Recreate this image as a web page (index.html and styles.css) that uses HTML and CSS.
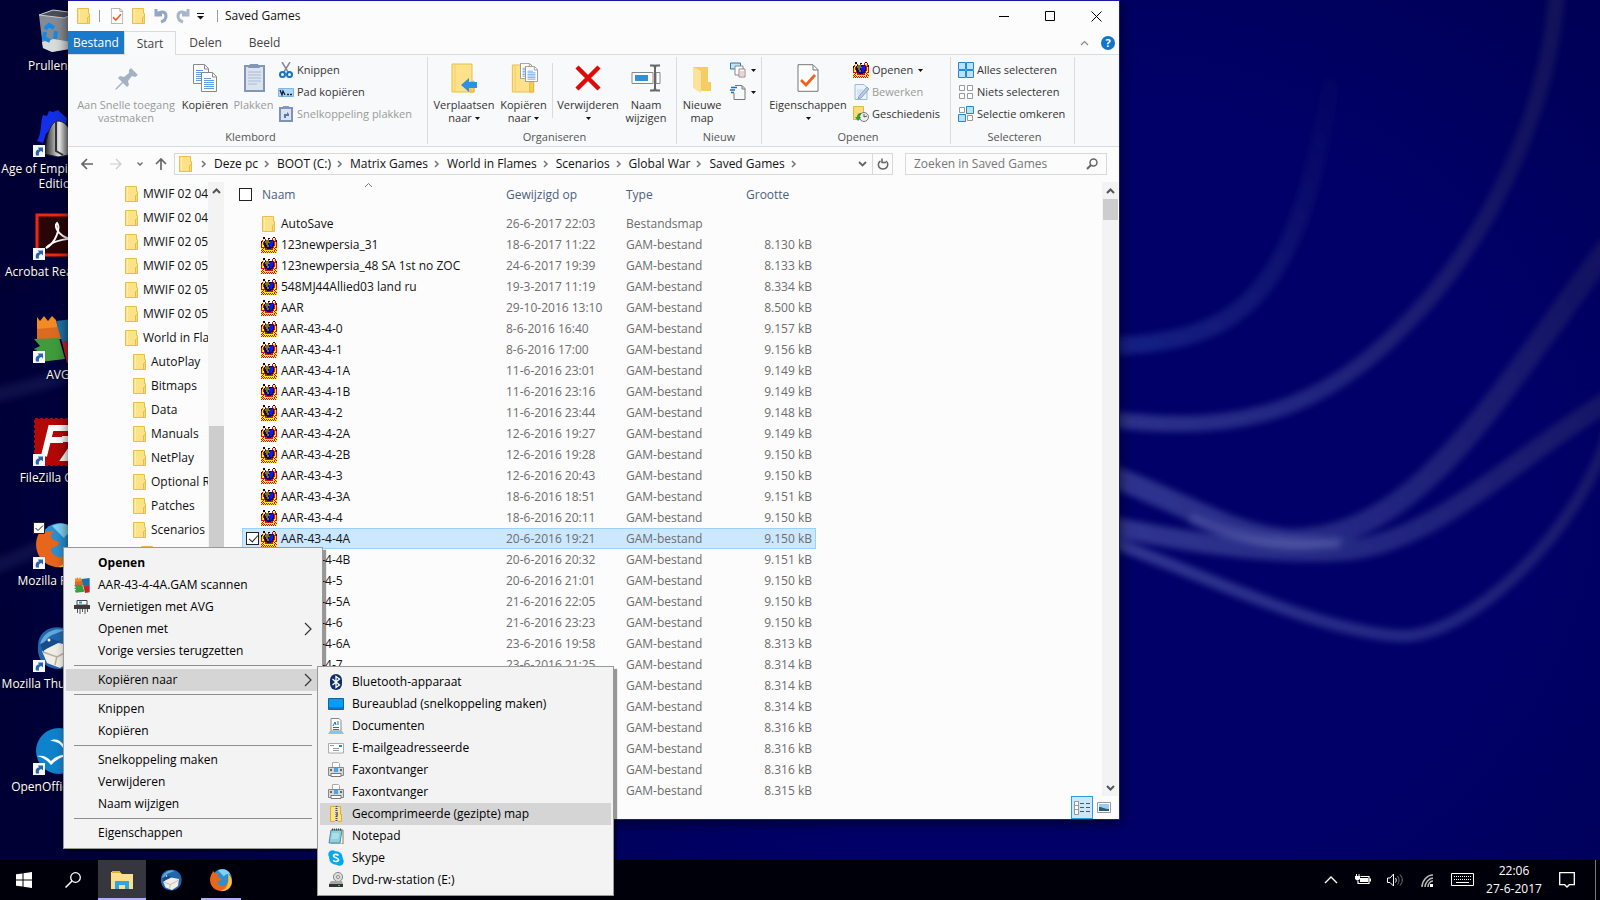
FILE: index.html
```html
<!DOCTYPE html>
<html lang="nl">
<head>
<meta charset="utf-8">
<title>Saved Games</title>
<link rel="stylesheet" href="styles.css">
</head>
<body>
<svg class="defs" aria-hidden="true">
  <defs>
    <symbol id="folder" viewBox="0 0 14 16"><path d="M.5.5h11v5h1v10H.5z" fill="#fde28a" stroke="#e8bf47"/><path d="M2.500 1v14" stroke="#ffefb5"/><path d="M10.500 15.500v-6l2-1.500v7.500z" fill="#fbd976" stroke="#e8bf47"/></symbol>
    <symbol id="bigfolder" viewBox="0 0 24 30"><path d="M1 1h20v18h2v10H1z" fill="#fde28a" stroke="#e8bf47"/><path d="M4 2v26" stroke="#f2cf66"/><path d="M19 29V19l4-1v11z" fill="#f7ce5d" stroke="#e3b53c"/></symbol>
    <symbol id="gam" viewBox="0 0 16 16" shape-rendering="crispEdges">
      <path d="M1 3h1v2h2V2h1v1h2V1h1v2h3V1h1v2h2V1h1v3h1v12H0V6h1z" fill="#e00d08"/>
      <path d="M0 11h2v1h2v1h8v-1h2v-1h2v5H0z" fill="#ffef10"/>
      <path d="M1 5h1v5H1zM14 5h1v5h-1zM2 2h1v3H2zM13 2h1v2h-1zM3 11h1v1H3zM12 11h1v1h-1zM2 8h1v2H2zM13 9h1v2h-1z" fill="#ffef10"/>
      <path d="M0 15h1v1H0zM2 15h1v1H2zM4 15h1v1H4zM6 15h1v1H6zM8 15h1v1H8zM10 15h1v1h-1zM12 15h1v1h-1zM14 15h1v1h-1zM1 14h1v1H1zM3 14h1v1H3zM5 14h1v1H5zM7 14h1v1H7zM9 14h1v1H9zM11 14h1v1h-1zM13 14h1v1h-1zM0 13h1v1H0zM2 13h1v1H2zM13 13h1v1h-1zM15 13h1v1h-1zM1 12h1v1H1zM14 12h1v1h-1z" fill="#e00d08"/>
      <path d="M4 3h8v1h1v5h-1v2h-2v1H6v-1H4V9H3V4h1z" fill="#07077a"/>
      <path d="M9 4h3v4h-1v2H9V8H8V6h1z" fill="#1216f0"/>
      <path d="M5 3h3v2h1v1H7v2h1v2H6V8H5V6H4V4h1z" fill="#7e7c08"/>
      <path d="M2 0h2v2H2zM7 1h2v1H7zM12 0h2v1h-2zM15 3h1v2h-1zM0 4h1v2H0z" fill="#1b0505"/>
    </symbol>
    <symbol id="chev" viewBox="0 0 6 8"><path d="M1 1l3 3-3 3" fill="none" stroke="#777" stroke-width="1.600"/></symbol>
    <symbol id="drop" viewBox="0 0 5 3"><path d="M0 0h5L2.500 3z" fill="#111"/></symbol>
    <symbol id="up" viewBox="0 0 9 6"><path d="M1 5l3.500-3.500L8 5" fill="none" stroke="currentColor" stroke-width="2"/></symbol>
    <symbol id="sub" viewBox="0 0 8 14"><path d="M1 1l6 6-6 6" fill="none" stroke="#333" stroke-width="1.200"/></symbol>
    <symbol id="doccheck" viewBox="0 0 22 28"><path d="M1 .7h15l5 5v21.600H1z" fill="#fff" stroke="#777"/><path d="M16 1v5h5" fill="none" stroke="#777"/><path d="M4 16l5 5 9-10" fill="none" stroke="#f0601c" stroke-width="2.800"/></symbol>
    <symbol id="page" viewBox="0 0 16 20"><path d="M.5.5h11l4 4v15H.5z" fill="#fff" stroke="#888"/><path d="M11.500 1v4h4" fill="none" stroke="#888"/><path d="M3 6.500h7M3 8.500h10M3 10.500h10M3 12.500h10M3 14.500h10M3 16.500h10" stroke="#5b9bea"/></symbol>
    <symbol id="shortcut" viewBox="0 0 12 12"><path d="M0 0h12v12H0z" fill="#f5f7fa"/><path d="M3 10.500C2 6 4 4.500 6 4.500L5 2.500h5v5L8.500 6C6 6.500 5.500 8 6 10.500z" fill="#2b62a8"/></symbol>
    <symbol id="firefox" viewBox="0 0 48 48"><circle cx="26" cy="22" r="20" fill="#2b8fd0"/><path d="M18 5c8-5 20-3 25 8-6-2-11 0-13 4z" fill="#7fd2f2"/><path d="M4 14c2-3 3-5 4-8 2 2 3 3 4 5 3-1 6-1 8 0-3 2-4 4-2 7 4 2 8 3 7 5-2 4-8 2-8 6 1 7 12 10 18 3 4-5 6-10 3-18 7 4 10 12 7 20C40 46 26 49 15 44 4 39-1 26 4 14z" fill="#e8661b"/><path d="M38 12c7 5 9 14 6 22-4 9-12 13-20 12 11-4 17-14 14-34z" fill="#fbc23a"/></symbol>
    <symbol id="tbird" viewBox="0 0 48 48"><path d="M4 22C4 8 16 1 30 4c13 3 18 16 14 28-5 11-16 15-26 12C8 41 3 33 4 22z" fill="#2166ac"/><path d="M6 20C9 8 21 3 31 6L18 11c-6 3-10 9-8 18z" fill="#62a9dc"/><path d="M8 27l16-8 16 3-2 14-12 8-13-5z" fill="#f1eee6"/><path d="M9 28l14 5 15-8M21 41l2-9" fill="none" stroke="#b7b0a4" stroke-width="1.500"/><path d="M6 20c5-1 8-6 12-5s5 3 9 1c-5 6-14 6-18 12z" fill="#174c8c"/><circle cx="15" cy="16" r="1.500" fill="#fff"/></symbol>
    <symbol id="avg" viewBox="0 0 48 48"><path d="M3 2l3 4 4-5 4 5 4-5 4 4 5 19-24 1z" fill="#f28b23"/><path d="M3 14l22-2 2 12-24 2z" fill="#dc6a22"/><path d="M22 6l25-3v23l-19 1z" fill="#1c72a8"/><path d="M0 24l25-1 6 21-25 3-4-6 5-3-7-4 6-3z" fill="#3f9b3b"/><path d="M28 27l19-2v21l-14 2z" fill="#c72322"/></symbol>
    <symbol id="fax" viewBox="0 0 16 16"><path d="M4.500 5V.5h6l1 1V5" fill="#fff" stroke="#aaa"/><path d="M.5 5.500h15v8H.5z" fill="#d4d8db" stroke="#888"/><path d="M2 7h2v2H2zM12 7h2v2h-2z" fill="#666"/><path d="M6 6h4v4H6z" fill="#45a8e5"/><path d="M3 11.500h10v3H3z" fill="#fff" stroke="#777"/></symbol>
    <filter id="soft"><feGaussianBlur stdDeviation="3"/></filter>
    <linearGradient id="metal"><stop offset="0" stop-color="#222"/><stop offset=".5" stop-color="#eee"/><stop offset="1" stop-color="#333"/></linearGradient>
    <linearGradient id="fade" gradientUnits="userSpaceOnUse" x1="1100" y1="600" x2="1600" y2="300"><stop offset="0" stop-color="#6068b8" stop-opacity=".55"/><stop offset=".5" stop-color="#5058a0" stop-opacity=".42"/><stop offset="1" stop-color="#556" stop-opacity=".22"/></linearGradient>
    <linearGradient id="fade1" gradientUnits="userSpaceOnUse" x1="1120" y1="345" x2="1335" y2="40"><stop offset="0" stop-color="#3450b0" stop-opacity=".4"/><stop offset=".5" stop-color="#445088" stop-opacity=".2"/><stop offset="1" stop-color="#445" stop-opacity="0"/></linearGradient>
  </defs>
</svg>

<svg class="wallpaper" viewBox="0 0 1600 900" preserveAspectRatio="xMaxYMid slice" aria-hidden="true">
  <g fill="none" filter="url(#soft)" stroke="url(#fade)">
    <path stroke="url(#fade1)" stroke-width="18" d="M1100 346C1200 346 1255 320 1290 240C1318 180 1325 110 1345 10"/>
    <path stroke-width="16" d="M1100 418C1260 440 1340 400 1430 298C1500 215 1550 100 1557-10"/>
    <path stroke-width="22" d="M1100 472C1180 500 1230 536 1290 540C1420 540 1500 390 1610 245"/>
    <path stroke-width="20" d="M1100 524C1200 545 1280 556 1350 550C1440 538 1510 460 1610 400"/>
    <path stroke-width="12" d="M1100 538C1200 572 1310 630 1400 636C1470 638 1580 530 1610 430"/>
    <path stroke="#8088c8" stroke-opacity=".25" stroke-width="12" d="M1190 518C1230 538 1280 542 1340 543"/>
    <path stroke="#7780c0" stroke-opacity=".12" stroke-width="14" d="M-10 396C30 388 50 380 80 372M-10 568C30 555 50 540 80 525"/>
  </g>
</svg>

<nav class="desktop-icons" aria-label="Bureaublad">
  <a class="shortcut" href="#"><svg class="dicon" viewBox="0 0 48 48"><path d="M5 9l14-5 23 3-5 35-19 4-9-4z" fill="#858b94"/><path d="M5 9l14-5 23 3-12 5z" fill="#4a4e57" stroke="#c8ccd2"/><path d="M8 36l12-3 17 3-1 7-18 3-9-4z" fill="#d8dcdb"/><path d="M11 23l4-4 5 3M22 25l-1 8M16 35l-6-3 1-6" fill="none" stroke="#1689e2" stroke-width="4"/></svg><span>Prullenbak</span></a>
  <a class="shortcut" href="#"><svg class="dicon" viewBox="0 0 48 48"><path d="M3 32C8 24 6 14 9 6l4 1 2-5 4 1 5-2 3 3 6 5-2 12-12-4-7 8-3 9z" fill="#1330e8"/><path d="M11 45C12 26 17 12 24 12c9 0 16 12 16 33l-16 3z" fill="url(#metal)" stroke="#222"/><path d="M22 12v30l7 4" fill="none" stroke="#333" stroke-width="2"/></svg><svg class="arrow"><use href="#shortcut"/></svg><span>Age of Empires Gold<br>Edition</span></a>
  <a class="shortcut" href="#"><svg class="dicon" viewBox="0 0 48 48"><path d="M3 3h45v40H3z" fill="#2a0507" stroke="#f4260c" stroke-width="3"/><path d="M12 36C22 31 27 15 23 11c-4 3 2 17 22 17-8-3-26 0-33 8z" fill="none" stroke="#fff" stroke-width="2"/></svg><svg class="arrow"><use href="#shortcut"/></svg><span>Acrobat Reader DC</span></a>
  <a class="shortcut" href="#"><svg class="dicon"><use href="#avg"/></svg><svg class="arrow"><use href="#shortcut"/></svg><span>AVG</span></a>
  <a class="shortcut" href="#"><svg class="dicon" viewBox="0 0 48 48"><path d="M1 1h46v46H1z" fill="#b30808" stroke="#b30808" stroke-width="2" stroke-dasharray="3 2"/><path d="M10 38L17 10h20M13 22h16M28 21h16L31 40h14" fill="none" stroke="#fff" stroke-width="6"/></svg><svg class="arrow"><use href="#shortcut"/></svg><span>FileZilla Client</span></a>
  <a class="shortcut" href="#"><svg class="dicon"><use href="#firefox"/></svg><svg class="tick" viewBox="0 0 12 12"><path d="M.5.5h11v11H.5z" fill="#fff" stroke="#222"/><path d="M2.500 6l2.500 2.500 5-5" fill="none" stroke="#222"/></svg><svg class="arrow"><use href="#shortcut"/></svg><span>Mozilla Firefox</span></a>
  <a class="shortcut" href="#"><svg class="dicon"><use href="#tbird"/></svg><svg class="arrow"><use href="#shortcut"/></svg><span>Mozilla Thunderbird</span></a>
  <a class="shortcut" href="#"><svg class="dicon" viewBox="0 0 48 48"><circle cx="25" cy="24" r="23" fill="#0f82cc"/><path d="M16 14c5-3 10-1 13 3 4-3 8-3 12-1-6 0-8 1-12 5-3-5-7-7-13-7zM3 29c7-1 10 1 14 5 6-6 12-7 20-6-8 1-14 4-20 10-4-5-9-8-14-9z" fill="#fff"/></svg><svg class="arrow"><use href="#shortcut"/></svg><span>OpenOffice 4.1.3</span></a>
</nav>

<main class="window">
  <header class="titlebar">
    <svg class="i14"><use href="#folder"/></svg><i class="bar"></i>
    <button class="quick" aria-label="Eigenschappen"><svg class="i14" viewBox="0 0 22 28"><use href="#doccheck"/></svg></button>
    <button class="quick" aria-label="Nieuwe map"><svg class="i14"><use href="#folder"/></svg></button>
    <button class="quick" aria-label="Ongedaan maken"><svg class="i14" viewBox="0 0 14 16"><path d="M2 1v6h6M3 6c3-3 9-3 9 2 0 3-2 5-5 6" fill="none" stroke="#93a7c4" stroke-width="3"/></svg></button>
    <button class="quick" aria-label="Opnieuw"><svg class="i14" viewBox="0 0 14 16"><path d="M12 1v6H6M11 6C8 3 2 3 2 8c0 3 2 5 5 6" fill="none" stroke="#a7b6cc" stroke-width="3"/></svg></button>
    <button class="more" aria-label="Werkbalk aanpassen"><svg viewBox="0 0 7 7"><path d="M0 .5h7" stroke="#111"/><path d="M0 3h7L3.500 6.500z" fill="#111"/></svg></button>
    <i class="bar"></i><h1>Saved Games</h1>
    <div class="controls">
      <button aria-label="Minimaliseren"><svg viewBox="0 0 11 11"><path d="M0 5.500h10" stroke="#000"/></svg></button>
      <button aria-label="Maximaliseren"><svg viewBox="0 0 11 11"><path d="M.5.5h9v9h-9z" fill="none" stroke="#000"/></svg></button>
      <button aria-label="Sluiten"><svg viewBox="0 0 11 11"><path d="M.5.5l10 10M10.500.5l-10 10" stroke="#000"/></svg></button>
    </div>
  </header>
  <div class="tabs">
    <button class="tab file">Bestand</button><button class="tab active">Start</button><button class="tab">Delen</button><button class="tab">Beeld</button>
    <div class="help"><button aria-label="Lint minimaliseren"><svg class="thin" viewBox="0 0 9 6"><path d="M1 5l3.500-3.500L8 5" fill="none" stroke="#888" stroke-width="1.200"/></svg></button><button class="question" aria-label="Help">?</button></div>
  </div>

  <section class="ribbon">
    <div class="group clip">
      <div class="tools">
        <button class="big pin off"><svg viewBox="0 0 30 30"><path d="M18 7l2-2 7 7-3 2-3-1-4 5 1 4-2 2-4-4-6 6-2 1 1-2 6-6-4-4 2-2 4 1 5-4z" fill="#a3b1c3"/></svg>Aan Snelle toegang<br>vastmaken</button>
        <button class="big copy"><svg viewBox="0 0 26 30"><use href="#page" x="1" y="1" width="16" height="20"/><use href="#page" x="9" y="9" width="16" height="20"/></svg>Kopiëren</button>
        <button class="big paste off"><svg viewBox="0 0 26 30"><path d="M4 3h19v25H4z" fill="#dbe3ef" stroke="#8296b8" stroke-width="2"/><path d="M9 1h8l2 4H7z" fill="#8296b8"/><path d="M7 9h13M7 12h13M7 15h13M7 18h13M7 21h9" stroke="#a9bad3"/></svg>Plakken</button>
        <div class="small">
          <button><svg viewBox="0 0 16 16"><path d="M4 0l6 10M12 0L6 10" stroke="#889" stroke-width="1.500"/><circle cx="4.500" cy="12.500" r="2.500" fill="none" stroke="#1672c4" stroke-width="2"/><circle cx="11.500" cy="12.500" r="2.500" fill="none" stroke="#1672c4" stroke-width="2"/></svg>Knippen</button>
          <button><svg viewBox="0 0 16 16"><path d="M.5 4.500h15v8H.5z" fill="#aed8f8" stroke="#7db6e2"/><path d="M2 6l2 5 1-4 2 4M9 10.500h2M12 10.500h2" fill="none" stroke="#123" stroke-width="1.300"/></svg>Pad kopiëren</button>
          <button class="off"><svg viewBox="0 0 16 16"><path d="M2 2h12v13H2z" fill="#dbe3ef" stroke="#7d92b8" stroke-width="2"/><path d="M5 0h6v3H5z" fill="#8598bc"/><path d="M6 12V8h3V6l2 2v2H8v2z" fill="#5a77ac"/></svg>Snelkoppeling plakken</button>
        </div>
      </div>
      <h2>Klembord</h2>
    </div>
    <div class="group organise">
      <div class="tools">
        <button class="big move"><svg viewBox="0 0 30 30"><use href="#bigfolder" x="2" width="24" height="30"/><path d="M12 22l8-7v4h8v6h-8v4z" fill="#2f8fe0"/></svg>Verplaatsen<br>naar <svg class="drop"><use href="#drop"/></svg></button>
        <button class="big move2"><svg viewBox="0 0 30 30"><use href="#bigfolder" x="2" y="1" width="24" height="29"/><use href="#page" x="11" y="0" width="13" height="16"/><use href="#page" x="16" y="3" width="13" height="16"/></svg>Kopiëren<br>naar <svg class="drop"><use href="#drop"/></svg></button>
        <i class="split"></i>
        <button class="big del"><svg viewBox="0 0 30 30"><path d="M4 4l22 22M26 4L4 26" stroke="#de0a0a" stroke-width="4.500"/></svg>Verwijderen<br><svg class="drop"><use href="#drop"/></svg></button>
        <button class="big name"><svg viewBox="0 0 30 30"><path d="M1 9.500h21v11H1zM25 9.500h4v11h-4z" fill="#fff" stroke="#888"/><path d="M4 12h13v6H4z" fill="#2f8fe0"/><path d="M19 2.500h4l1 2 1-2h4M24 3v24M19 27.500h4l1-2 1 2h4" fill="none" stroke="#666" stroke-width="2"/></svg>Naam<br>wijzigen</button>
      </div>
      <h2>Organiseren</h2>
    </div>
    <div class="group new">
      <div class="tools">
        <button class="big map"><svg viewBox="0 0 30 30"><path d="M6 4h15v15l3 0v9H11z" fill="#f5cd62"/><path d="M6 4l8 4v22l-8-5z" fill="#fde39a"/></svg>Nieuwe<br>map</button>
        <div class="small">
          <button aria-label="Nieuw item"><svg viewBox="0 0 16 16"><path d="M.5 1h10v6H.5z" fill="#bfe3fa" stroke="#2779a8"/><path d="M5 4h8v9H5z" fill="#fff" stroke="#888"/><path d="M9 7h6v8H9z" fill="#fff" stroke="#888"/><path d="M11 9v5M13 9v5" stroke="#e0a3a3"/></svg><svg class="drop"><use href="#drop"/></svg></button>
          <button aria-label="Eenvoudige toegang"><svg viewBox="0 0 16 16"><path d="M5 1.500h7l3 3v11H4V9M12 2v3h3" fill="none" stroke="#777"/><path d="M1 3.500h6M0 6h5M1 8.500h3" stroke="#1672c4" stroke-width="1.300"/></svg><svg class="drop"><use href="#drop"/></svg></button>
        </div>
      </div>
      <h2>Nieuw</h2>
    </div>
    <div class="group open">
      <div class="tools">
        <button class="big props"><svg viewBox="0 0 30 30"><use href="#doccheck" x="4" y="1" width="22" height="28"/></svg>Eigenschappen<br><svg class="drop"><use href="#drop"/></svg></button>
        <div class="small">
          <button><svg><use href="#gam"/></svg>Openen<svg class="drop"><use href="#drop"/></svg></button>
          <button class="off"><svg viewBox="0 0 16 16"><path d="M2 .5h9l3 3v12H2z" fill="#eaf3fc" stroke="#9fb8d6"/><path d="M4 6h6M4 8h6M4 10h5" stroke="#c2d3e8"/><path d="M14 3l-8 9-1 3 3-1 8-9z" fill="#b7cbe6" stroke="#8aa5cb"/></svg>Bewerken</button>
          <button><svg viewBox="0 0 16 16"><path d="M.5.5h10v13H.5z" fill="#fbdc7d" stroke="#e0b944"/><circle cx="11" cy="11" r="4.500" fill="#eee" stroke="#777"/><path d="M11 8v3l3-1" fill="none" stroke="#555"/><path d="M8 7c-3 0-4 2-4 4H2l3 4 3-4H6c0-1 1-2 2-2z" fill="#2c9e35"/></svg>Geschiedenis</button>
        </div>
      </div>
      <h2>Openen</h2>
    </div>
    <div class="group select">
      <div class="tools">
        <div class="small">
          <button><svg viewBox="0 0 16 16"><path d="M.5.5h7v7h-7zM8.500.5h7v7h-7zM.5 8.500h7v7h-7zM8.500 8.500h7v7h-7z" fill="#b9e2fb" stroke="#2386d8"/></svg>Alles selecteren</button>
          <button><svg viewBox="0 0 16 16"><path d="M1.500 1.500h5v5h-5zM9.500 1.500h5v5h-5zM1.500 9.500h5v5h-5zM9.500 9.500h5v5h-5z" fill="#fff" stroke="#999"/></svg>Niets selecteren</button>
          <button><svg viewBox="0 0 16 16"><path d="M1.500 1.500h5v5h-5zM9.500 9.500h5v5h-5z" fill="#fff" stroke="#999"/><path d="M8.500.5h7v7h-7zM.5 8.500h7v7h-7z" fill="#b9e2fb" stroke="#2386d8"/></svg>Selectie omkeren</button>
        </div>
      </div>
      <h2>Selecteren</h2>
    </div>
  </section>

  <div class="addressbar">
    <button class="nav" aria-label="Vorige"><svg viewBox="0 0 12 12"><path d="M12 6H1M6 1L1 6l5 5" fill="none" stroke="#666" stroke-width="1.700"/></svg></button>
    <button class="nav fwd" aria-label="Volgende"><svg viewBox="0 0 12 12"><path d="M0 6h11M6 1l5 5-5 5" fill="none" stroke="#ccc" stroke-width="1.200"/></svg></button>
    <button class="nav recent" aria-label="Recente locaties"><svg viewBox="0 0 6 4"><path d="M.5.5L3 3 5.500.5" fill="none" stroke="#666" stroke-width="1.300"/></svg></button>
    <button class="nav" aria-label="Omhoog"><svg viewBox="0 0 12 12"><path d="M6 12V1M1 6l5-5 5 5" fill="none" stroke="#666" stroke-width="1.700"/></svg></button>
    <div class="path">
      <svg class="i14"><use href="#folder"/></svg>
      <svg class="chev"><use href="#chev"/></svg><a href="#">Deze pc</a>
      <svg class="chev"><use href="#chev"/></svg><a href="#">BOOT (C:)</a>
      <svg class="chev"><use href="#chev"/></svg><a href="#">Matrix Games</a>
      <svg class="chev"><use href="#chev"/></svg><a href="#">World in Flames</a>
      <svg class="chev"><use href="#chev"/></svg><a href="#">Scenarios</a>
      <svg class="chev"><use href="#chev"/></svg><a href="#">Global War</a>
      <svg class="chev"><use href="#chev"/></svg><a href="#">Saved Games</a>
      <svg class="chev"><use href="#chev"/></svg>
      <button class="history" aria-label="Vorige locaties"><svg viewBox="0 0 9 6"><path d="M1 1l3.500 3.500L8 1" fill="none" stroke="#666" stroke-width="1.800"/></svg></button>
      <button class="refresh" aria-label="Vernieuwen"><svg viewBox="0 0 12 12"><path d="M3.500 3C0 5 1 11 6 11s6-6 3-8M5 .5v4h4" fill="none" stroke="#666" stroke-width="1.500"/></svg></button>
    </div>
    <div class="search"><input type="text" placeholder="Zoeken in Saved Games" aria-label="Zoeken in Saved Games"><svg viewBox="0 0 12 12"><circle cx="7.500" cy="4.500" r="3.500" fill="none" stroke="#666" stroke-width="1.500"/><path d="M5 7L1 11" stroke="#666" stroke-width="2"/></svg></div>
  </div>

  <div class="body">
    <nav class="tree" aria-label="Mappen">
      <ul>
        <li><svg><use href="#folder"/></svg>MWIF 02 04</li>
        <li><svg><use href="#folder"/></svg>MWIF 02 04</li>
        <li><svg><use href="#folder"/></svg>MWIF 02 05</li>
        <li><svg><use href="#folder"/></svg>MWIF 02 05</li>
        <li><svg><use href="#folder"/></svg>MWIF 02 05</li>
        <li><svg><use href="#folder"/></svg>MWIF 02 05</li>
        <li><svg><use href="#folder"/></svg>World in Flames</li>
        <li class="deep"><svg><use href="#folder"/></svg>AutoPlay</li>
        <li class="deep"><svg><use href="#folder"/></svg>Bitmaps</li>
        <li class="deep"><svg><use href="#folder"/></svg>Data</li>
        <li class="deep"><svg><use href="#folder"/></svg>Manuals</li>
        <li class="deep"><svg><use href="#folder"/></svg>NetPlay</li>
        <li class="deep"><svg><use href="#folder"/></svg>Optional Rules</li>
        <li class="deep"><svg><use href="#folder"/></svg>Patches</li>
        <li class="deep"><svg><use href="#folder"/></svg>Scenarios</li>
        <li class="deeper"><svg><use href="#folder"/></svg></li>
      </ul>
      <div class="scroll"><svg><use href="#up"/></svg><i class="thumb low"></i></div>
    </nav>
    <section class="files">
      <div class="pane">
        <label class="all"><input type="checkbox" aria-label="Alles selecteren"></label>
        <svg class="sort" viewBox="0 0 9 6"><path d="M1 5l3.500-3.500L8 5" fill="none" stroke="#777"/></svg>
        <table>
          <thead><tr><th class="c1">Naam</th><th class="c2">Gewijzigd op</th><th class="c3">Type</th><th class="c4">Grootte</th></tr></thead>
          <tbody>
          <tr><td><svg class="dir"><use href="#folder"/></svg>AutoSave</td><td>26-6-2017 22:03</td><td>Bestandsmap</td><td></td></tr>
          <tr><td><svg><use href="#gam"/></svg>123newpersia_31</td><td>18-6-2017 11:22</td><td>GAM-bestand</td><td>8.130 kB</td></tr>
          <tr><td><svg><use href="#gam"/></svg>123newpersia_48 SA 1st no ZOC</td><td>24-6-2017 19:39</td><td>GAM-bestand</td><td>8.133 kB</td></tr>
          <tr><td><svg><use href="#gam"/></svg>548MJ44Allied03 land ru</td><td>19-3-2017 11:19</td><td>GAM-bestand</td><td>8.334 kB</td></tr>
          <tr><td><svg><use href="#gam"/></svg>AAR</td><td>29-10-2016 13:10</td><td>GAM-bestand</td><td>8.500 kB</td></tr>
          <tr><td><svg><use href="#gam"/></svg>AAR-43-4-0</td><td>8-6-2016 16:40</td><td>GAM-bestand</td><td>9.157 kB</td></tr>
          <tr><td><svg><use href="#gam"/></svg>AAR-43-4-1</td><td>8-6-2016 17:00</td><td>GAM-bestand</td><td>9.156 kB</td></tr>
          <tr><td><svg><use href="#gam"/></svg>AAR-43-4-1A</td><td>11-6-2016 23:01</td><td>GAM-bestand</td><td>9.149 kB</td></tr>
          <tr><td><svg><use href="#gam"/></svg>AAR-43-4-1B</td><td>11-6-2016 23:16</td><td>GAM-bestand</td><td>9.149 kB</td></tr>
          <tr><td><svg><use href="#gam"/></svg>AAR-43-4-2</td><td>11-6-2016 23:44</td><td>GAM-bestand</td><td>9.148 kB</td></tr>
          <tr><td><svg><use href="#gam"/></svg>AAR-43-4-2A</td><td>12-6-2016 19:27</td><td>GAM-bestand</td><td>9.149 kB</td></tr>
          <tr><td><svg><use href="#gam"/></svg>AAR-43-4-2B</td><td>12-6-2016 19:28</td><td>GAM-bestand</td><td>9.150 kB</td></tr>
          <tr><td><svg><use href="#gam"/></svg>AAR-43-4-3</td><td>12-6-2016 20:43</td><td>GAM-bestand</td><td>9.150 kB</td></tr>
          <tr><td><svg><use href="#gam"/></svg>AAR-43-4-3A</td><td>18-6-2016 18:51</td><td>GAM-bestand</td><td>9.151 kB</td></tr>
          <tr><td><svg><use href="#gam"/></svg>AAR-43-4-4</td><td>18-6-2016 20:11</td><td>GAM-bestand</td><td>9.150 kB</td></tr>
          <tr class="selected"><td><input type="checkbox" checked aria-label="AAR-43-4-4A selecteren"><svg><use href="#gam"/></svg>AAR-43-4-4A</td><td>20-6-2016 19:21</td><td>GAM-bestand</td><td>9.150 kB</td></tr>
          <tr><td><svg><use href="#gam"/></svg>AAR-43-4-4B</td><td>20-6-2016 20:32</td><td>GAM-bestand</td><td>9.151 kB</td></tr>
          <tr><td><svg><use href="#gam"/></svg>AAR-43-4-5</td><td>20-6-2016 21:01</td><td>GAM-bestand</td><td>9.150 kB</td></tr>
          <tr><td><svg><use href="#gam"/></svg>AAR-43-4-5A</td><td>21-6-2016 22:05</td><td>GAM-bestand</td><td>9.150 kB</td></tr>
          <tr><td><svg><use href="#gam"/></svg>AAR-43-4-6</td><td>21-6-2016 23:23</td><td>GAM-bestand</td><td>9.150 kB</td></tr>
          <tr><td><svg><use href="#gam"/></svg>AAR-43-4-6A</td><td>23-6-2016 19:58</td><td>GAM-bestand</td><td>8.313 kB</td></tr>
          <tr><td><svg><use href="#gam"/></svg>AAR-43-4-7</td><td>23-6-2016 21:25</td><td>GAM-bestand</td><td>8.314 kB</td></tr>
          <tr><td></td><td></td><td>GAM-bestand</td><td>8.314 kB</td></tr>
          <tr><td></td><td></td><td>GAM-bestand</td><td>8.314 kB</td></tr>
          <tr><td></td><td></td><td>GAM-bestand</td><td>8.316 kB</td></tr>
          <tr><td></td><td></td><td>GAM-bestand</td><td>8.316 kB</td></tr>
          <tr><td></td><td></td><td>GAM-bestand</td><td>8.316 kB</td></tr>
          <tr><td></td><td></td><td>GAM-bestand</td><td>8.315 kB</td></tr>
          </tbody>
        </table>
      </div>
      <div class="scroll"><svg><use href="#up"/></svg><i class="thumb"></i><svg class="down"><use href="#up"/></svg></div>
    </section>
  </div>
  <footer class="views">
    <button class="on" aria-label="Details"><svg viewBox="0 0 16 14"><path d="M.5.5h4v4h-4zM.5 4.500h4v4h-4zM.5 8.500h4v5h-4z" fill="#fff" stroke="#999"/><path d="M6 2.500h4M12 2.500h4M6 6.500h4M12 6.500h4M6 10.500h4M12 10.500h4" stroke="#555"/></svg></button>
    <button aria-label="Grote pictogrammen"><svg viewBox="0 0 14 12"><path d="M.5.5h13v10H.5z" fill="#fff" stroke="#999"/><path d="M2 2h10v7H2z" fill="#9cc9f5"/><path d="M2 5c4 0 5 2 10 2v2H2z" fill="#2b5f6b"/></svg></button>
  </footer>
</main>

<div class="menu context" role="menu">
  <button role="menuitem"><b>Openen</b></button>
  <button role="menuitem"><svg><use href="#avg"/></svg>AAR-43-4-4A.GAM scannen</button>
  <button role="menuitem"><svg viewBox="0 0 16 16"><path d="M3 1.500h10V6H3z" fill="#fff" stroke="#444"/><path d="M5 3.500h3" stroke="#1597e5" stroke-width="2"/><path d="M0 6h16v4H0z" fill="#3b3b3b"/><path d="M3.500 10v4M6 10v5M8.500 10v3M11 10v5M13.500 10v3" stroke="#555"/></svg>Vernietigen met AVG</button>
  <button role="menuitem">Openen met<svg class="more-arrow"><use href="#sub"/></svg></button>
  <button role="menuitem">Vorige versies terugzetten</button>
  <hr>
  <button role="menuitem" class="hot">Kopiëren naar<svg class="more-arrow"><use href="#sub"/></svg></button>
  <hr>
  <button role="menuitem">Knippen</button>
  <button role="menuitem">Kopiëren</button>
  <hr>
  <button role="menuitem">Snelkoppeling maken</button>
  <button role="menuitem">Verwijderen</button>
  <button role="menuitem">Naam wijzigen</button>
  <hr>
  <button role="menuitem">Eigenschappen</button>
</div>

<footer class="taskbar">
  <button class="task" aria-label="Start"><svg viewBox="0 0 16 16"><path d="M0 2.300L6.500 1.400v6.100H0zM7.500 1.200L16 0v7.500H7.500zM0 8.500h6.500v6.100L0 13.700zM7.500 8.500H16V16l-8.500-1.200z" fill="#fff"/></svg></button>
  <button class="task" aria-label="Zoeken"><svg viewBox="0 0 16 16"><circle cx="10.500" cy="5.500" r="4.800" fill="none" stroke="#fff" stroke-width="1.300"/><path d="M7 9L.5 15.500" stroke="#fff" stroke-width="1.500"/></svg></button>
  <button class="task current" aria-label="Verkenner"><svg class="large" viewBox="0 0 24 24"><path d="M1 4h9l2 2h11v15H1z" fill="#fbdf8c"/><path d="M2 3h8v2H2z" fill="#e5ae35"/><path d="M5 21v-8h14v8h-4v-4H9v4z" fill="#2fa4e7"/></svg></button>
  <button class="task" aria-label="Thunderbird"><svg class="large"><use href="#tbird"/></svg></button>
  <button class="task running" aria-label="Firefox"><svg class="large"><use href="#firefox"/></svg></button>
  <div class="tray">
    <button aria-label="Verborgen pictogrammen"><svg viewBox="0 0 16 16"><path d="M2 11l6-6 6 6" fill="none" stroke="#fff" stroke-width="1.400"/></svg></button>
    <button aria-label="Batterij"><svg viewBox="0 0 16 16"><path d="M5.500 4.500H14v7H3V9" fill="none" stroke="#fff" stroke-width="1.200"/><path d="M5 6h8v4H5zM14.500 6.500H16v3h-1.500zM0 4h5v3L3 8.500H2L0 7zM1 2h1v2H1zM3.500 2h1v2h-1z" fill="#fff"/></svg></button>
    <button aria-label="Volume"><svg viewBox="0 0 16 16"><path d="M.5 6h2.500l3.500-4v12L3 10.500H.5z" fill="none" stroke="#fff"/><path d="M8.500 6c1 1.500 1 3 0 4.500" fill="none" stroke="#fff"/><path d="M10.500 4c2 3 2 6 0 8.500M13 2.500c3 4 3 7 0 11" fill="none" stroke="#777"/></svg></button>
    <button aria-label="Netwerk"><svg viewBox="0 0 16 16"><path d="M3 15C3 9 8 3 14 3M6 15c0-4 4-9 8-9M9 15c0-3 2-6 5-6" fill="none" stroke="#bbb" stroke-width="1.500"/><path d="M11 12h3v3h-3z" fill="#fff"/></svg></button>
    <button class="keys" aria-label="Toetsenbord"><svg viewBox="0 0 23 14"><path d="M.5.5h22v12H.5z" fill="none" stroke="#fff"/><path d="M3 3.500h17M3 6.500h17" stroke="#fff" stroke-dasharray="1 1"/><path d="M5 9.500h13" stroke="#fff"/></svg></button>
    <button class="clock">22:06<br>27-6-2017</button>
    <button class="notify" aria-label="Meldingen"><svg viewBox="0 0 16 16"><path d="M.7.7h14.600v12h-5L8 15l-2.300-2.300h-5z" fill="none" stroke="#fff" stroke-width="1.300"/></svg></button>
    <i class="peek"></i>
  </div>
</footer>

<div class="menu sendto" role="menu">
  <button role="menuitem"><svg viewBox="0 0 16 16"><rect x="2" width="12" height="16" rx="6" fill="#0f2f6b"/><path d="M4.500 5l7 6L8 13.500v-11L11.500 5l-7 6" fill="none" stroke="#fff" stroke-width="1.300"/></svg>Bluetooth-apparaat</button>
  <button role="menuitem"><svg viewBox="0 0 16 16"><path d="M.5 2.500h15v11H.5z" fill="#0d9af2" stroke="#0b63a8"/><path d="M1 12h14" stroke="#08599b"/></svg>Bureaublad (snelkoppeling maken)</button>
  <button role="menuitem"><svg viewBox="0 0 16 16"><path d="M3 .5h8l2 2V13H3z" fill="#fff" stroke="#888"/><path d="M5 8l2-4 1 3M9 4h2M9 6h2M5 9.500h6M5 11.500h6" fill="none" stroke="#1672c4"/><path d="M2 13h12l2 3H0z" fill="#7ccaf3"/></svg>Documenten</button>
  <button role="menuitem"><svg viewBox="0 0 16 16"><path d="M.5 3.500h15v9.500H.5z" fill="#fff" stroke="#aaa"/><path d="M11 5h3v2h-3z" fill="#2386d8"/><path d="M2 5.500h4M5 8.500h6M5 10.500h6" stroke="#999"/></svg>E-mailgeadresseerde</button>
  <button role="menuitem"><svg><use href="#fax"/></svg>Faxontvanger</button>
  <button role="menuitem"><svg><use href="#fax"/></svg>Faxontvanger</button>
  <button role="menuitem" class="hot"><svg viewBox="0 0 16 16"><path d="M2.500.5h10v8h1v7h-11z" fill="#fde28a" stroke="#e0ad2c"/><path d="M7 0h3v16H7z" fill="#ddd"/><path d="M8.500 0v16" stroke="#444" stroke-width="2" stroke-dasharray="1 1"/><path d="M8 6h2v4H8z" fill="#777"/></svg>Gecomprimeerde (gezipte) map</button>
  <button role="menuitem"><svg viewBox="0 0 16 16"><path d="M4 2h11v14H4z" fill="#fff" stroke="#8c7b5a"/><path d="M3 2h11l-2 13H1z" fill="#8fd0de" stroke="#4b8f9e"/><path d="M4 1.500h10" stroke="#444" stroke-width="2" stroke-dasharray="1 1"/><path d="M4 6h7M4 8h7M3 10h7" stroke="#c9ecf2"/></svg>Notepad</button>
  <button role="menuitem"><svg viewBox="0 0 16 16"><circle cx="8" cy="8" r="6.800" fill="#00a9ef"/><circle cx="4.500" cy="4.500" r="4.200" fill="#00a9ef"/><circle cx="11.500" cy="11.500" r="4.200" fill="#00a9ef"/><path d="M10.500 5.500C9 4 5.500 4 5.500 6s5 1.500 5 3.700-4 2.300-5.300.6" fill="none" stroke="#fff" stroke-width="1.700"/></svg>Skype</button>
  <button role="menuitem"><svg viewBox="0 0 16 16"><circle cx="10" cy="5" r="4.600" fill="#dadada" stroke="#888"/><circle cx="10" cy="5" r="1.500" fill="#fff" stroke="#888"/><path d="M3 9h11l1 3H1z" fill="#a6a6a6"/><path d="M1 12h14v3H1z" fill="#333"/><path d="M10 13.500h2" stroke="#2fd53c"/></svg>Dvd-rw-station (E:)</button>
</div>
</body>
</html>
```

FILE: styles.css
```css
* { box-sizing: border-box; }
body {
  margin: 0;
  height: 100vh;
  overflow: hidden;
  position: relative;
  font: 12px/16px "Open Sans", "Noto Sans", sans-serif;
  color: #111;
  background: radial-gradient(ellipse 70% 110% at 68% 55%, #000068 40%, #000050 75%, #000034 100%);
}
button { font: inherit; color: inherit; background: none; border: 0; margin: 0; padding: 0; white-space: nowrap; }
a { color: inherit; text-decoration: none; }
svg { display: block; flex: none; }
h1, h2 { font: inherit; margin: 0; }
.defs { position: absolute; width: 0; height: 0; }
.wallpaper { position: absolute; inset: 0; width: 100%; height: 100%; }

/* Desktop shortcuts */
.desktop-icons { position: absolute; left: 0; top: 6px; width: 116px; display: grid; grid-auto-rows: 103px; }
.shortcut { position: relative; display: flex; flex-direction: column; align-items: center; gap: 4px; color: #fff; line-height: 15px; text-align: center; white-space: nowrap; text-shadow: 1px 1px 2px #000; }
.dicon { width: 48px; height: 48px; }
.arrow { position: absolute; left: 33px; top: 36px; width: 12px; height: 12px; }
.tick { position: absolute; left: 33px; top: 1px; width: 12px; height: 12px; }

/* Explorer window */
.window {
  position: absolute; left: 68px; right: 480px; top: 0; bottom: 80px;
  display: flex; flex-direction: column;
  background: #fcfcfc; border: solid #1818a4; border-width: 1px 1px 1px 0;
  box-shadow: 0 2px 12px #000a;
}
.titlebar { display: flex; align-items: center; height: 30px; padding-left: 9px; }
.i14 { width: 14px; height: 16px; }
.bar { flex: none; width: 1px; height: 12px; background: #999; margin: 0 7px 0 8px; }
.quick { width: 22px; padding-left: 3px; }
.more { width: 14px; padding-left: 2px; }
.more svg { width: 7px; height: 7px; }
.titlebar h1 { flex: 1; }
.controls { display: flex; }
.controls button { width: 46px; height: 30px; display: grid; place-items: center; }
.controls svg { width: 11px; height: 11px; }
.tabs { display: flex; height: 24px; border-bottom: 1px solid #dadbdc; }
.tab { width: 59px; height: 23px; color: #444; }
.tab.file { width: 56px; background: #1979ca; color: #fff; }
.tab.active { width: 52px; height: 24px; background: #f9fafb; border: 1px solid #dadbdc; border-bottom: 0; }
.help { margin-left: auto; display: flex; align-items: center; gap: 12px; padding-right: 4px; }
.thin { width: 9px; height: 6px; }
.question { width: 14px; height: 14px; border-radius: 50%; background: #1474cc; color: #fff; font-weight: 700; font-size: 11px; line-height: 14px; }

.ribbon { display: flex; height: 92px; background: #f8f9fa; border-bottom: 1px solid #dadbdc; color: #333; font-size: 11px; }
.group { display: flex; flex-direction: column; justify-content: space-between; margin: 2px 0; border-right: 1px solid #dadbdc; }
.group h2 { text-align: center; color: #555; line-height: 14px; }
.clip { width: 360px; padding-left: 6px; }
.organise { width: 249px; padding-left: 5px; }
.new { width: 85px; }
.open { width: 189px; padding-left: 4px; }
.select { width: 124px; padding-left: 4px; }
.tools { display: flex; align-items: flex-start; }
.big { display: block; padding-top: 6px; line-height: 13px; text-align: center; }
.big > svg:first-child { width: 30px; height: 30px; margin: 0 auto 5px; }
.drop, .big > svg.drop { display: inline-block; width: 5px; height: 3px; margin: 0 0 2px; }
.pin { width: 104px; }
.copy { width: 54px; }
.paste { width: 43px; }
.move { width: 62px; }
.move2 { width: 57px; }
.del { width: 70px; }
.name { width: 46px; }
.map { width: 50px; }
.props { width: 84px; }
.split { width: 1px; height: 55px; margin-top: 6px; background: #dadbdc; }
.off { color: #999; }
.small { display: flex; flex-direction: column; padding-left: 3px; padding-top: 2px; }
.small button { display: flex; align-items: center; gap: 3px; height: 22px; }
.small button > svg:first-child { width: 16px; height: 16px; }
.small .drop { margin: 0 2px; }

.addressbar { display: flex; align-items: center; padding: 6px 12px 6px 13px; height: 34px; }
.nav { margin-right: 17px; }
.nav svg { width: 12px; height: 12px; }
.nav.fwd { margin-right: 15px; }
.nav.recent { margin-right: 12px; }
.nav.recent svg { width: 6px; height: 4px; }
.nav:nth-child(4) { margin-right: 7px; }
.path { flex: 1; display: flex; align-items: center; height: 22px; border: 1px solid #d9d9d9; padding-left: 4px; }
.path a { margin-right: 6px; white-space: nowrap; }
.chev { width: 6px; height: 8px; margin-right: 7px; }
.path > .i14 { margin-right: 8px; }
.history { margin-left: auto; width: 14px; }
.history svg { width: 9px; height: 6px; }
.refresh { width: 20px; height: 20px; border-left: 1px solid #d9d9d9; padding-left: 4px; }
.refresh svg { width: 12px; height: 12px; }
.search { width: 202px; height: 22px; margin-left: 12px; display: flex; align-items: center; border: 1px solid #d9d9d9; padding: 0 8px; }
.search input { flex: 1; min-width: 0; border: 0; background: none; padding: 0; font: inherit; }
.search input::placeholder { color: #777; opacity: 1; }
.search svg { width: 12px; height: 12px; }

.body { flex: 1; min-height: 0; display: flex; padding-top: 1px; }
.tree { width: 156px; display: flex; }
.tree ul { flex: 1; min-width: 0; margin: 0; padding: 0 0 0 57px; list-style: none; overflow: hidden; }
.tree li { display: flex; align-items: center; gap: 4px; height: 24px; white-space: nowrap; }
.tree li svg { width: 14px; height: 16px; }
.tree .deep { padding-left: 8px; }
.tree .deeper { padding-left: 16px; }
.scroll { width: 16px; background: #f3f3f3; color: #555; display: flex; flex-direction: column; align-items: center; padding-top: 6px; }
.scroll svg { width: 9px; height: 6px; }
.thumb { width: 15px; height: 21px; margin-top: 5px; background: #cdcdcd; }
.thumb.low { margin-top: 232px; flex: 1; }
.down { margin-top: auto; margin-bottom: 5px; transform: rotate(180deg); }
.files { flex: 1; min-width: 0; display: flex; padding-right: 1px; }
.pane { flex: 1; position: relative; overflow: hidden; padding-left: 18px; }
.all { position: absolute; left: 15px; top: 6px; }
.sort { position: absolute; left: 140px; top: 0; width: 9px; height: 6px; }
input[type="checkbox"] { appearance: none; display: block; position: relative; margin: 0; width: 13px; height: 13px; border: 1px solid #222; background: #fff; }
input[type="checkbox"]:checked::after { content: ""; position: absolute; left: 4px; top: 0; width: 4px; height: 8px; border: solid #222; border-width: 0 1px 1px 0; transform: rotate(42deg); }
table { border-collapse: collapse; table-layout: fixed; width: 574px; color: #6d6d6d; }
th { font-weight: 400; text-align: left; color: #4c607a; padding: 0 0 6px; height: 31px; }
th.c1 { width: 264px; padding-left: 20px; }
th.c2, th.c3 { width: 120px; }
td { padding: 0; height: 21px; white-space: nowrap; line-height: 16px; }
td:first-child { display: flex; align-items: center; gap: 4px; padding-left: 19px; color: #111; }
td:first-child svg { width: 16px; height: 16px; }
td:last-child { text-align: right; padding-right: 4px; }
.selected { background: #cce8ff; outline: 1px solid #99d1ff; outline-offset: -1px; }
.selected td:first-child { padding-left: 4px; gap: 2px; }
.selected td:first-child svg { margin-right: 2px; }
.views { display: flex; align-items: center; justify-content: flex-end; gap: 4px; height: 23px; padding-right: 8px; flex: none; }
.views button { height: 23px; }
.views .on { width: 22px; background: #cce8f8; border: 1px solid #26a0da; display: grid; place-items: center; }
.views svg { width: 14px; height: 12px; }
.views .on svg { width: 16px; height: 14px; }

/* Menus */
.menu { position: absolute; background: #f3f3f3; border: 1px solid #999; padding: 4px 2px; box-shadow: 3px 3px 1px #0006; color: #000; }
.menu button { position: relative; display: block; width: 100%; height: 22px; padding-left: 32px; text-align: left; }
.menu button > svg:not(.more-arrow) { position: absolute; left: 8px; top: 3px; width: 16px; height: 16px; }
.menu .more-arrow { position: absolute; right: 8px; top: 4px; width: 8px; height: 14px; }
.menu .hot { background: #d5d5d5; }
.menu hr { height: 1px; border: 0; background: #8f8f8f; margin: 3px 8px; }
.context { left: 63px; top: 547px; width: 260px; }
.sendto { left: 317px; top: 666px; width: 297px; }

/* Taskbar */
.taskbar { position: absolute; left: 0; right: 0; bottom: 0; height: 40px; display: flex; background: #00000a; color: #fff; }
.task { width: 48px; height: 40px; display: grid; place-items: center; margin-right: 1px; border-bottom: 2px solid transparent; border-top: 2px solid transparent; }
.task svg { width: 16px; height: 16px; }
.task .large { width: 24px; height: 24px; }
.current { background: #36363f; border-bottom-color: #b0b0f8; border-top-color: #36363f; }
.running { width: 40px; margin-left: 5px; border-bottom-color: #b0b0f8; }
.tray { margin-left: auto; display: flex; align-items: center; }
.tray button { width: 32px; height: 40px; display: grid; place-items: center; }
.tray svg { width: 16px; height: 16px; }
.tray .keys { width: 38px; }
.keys svg { width: 23px; height: 14px; }
.tray .clock { width: 66px; display: block; line-height: 18px; text-align: center; }
.tray .notify { width: 40px; margin-right: 8px; }
.peek { width: 1px; height: 40px; background: #777; margin-right: 4px; }
```
